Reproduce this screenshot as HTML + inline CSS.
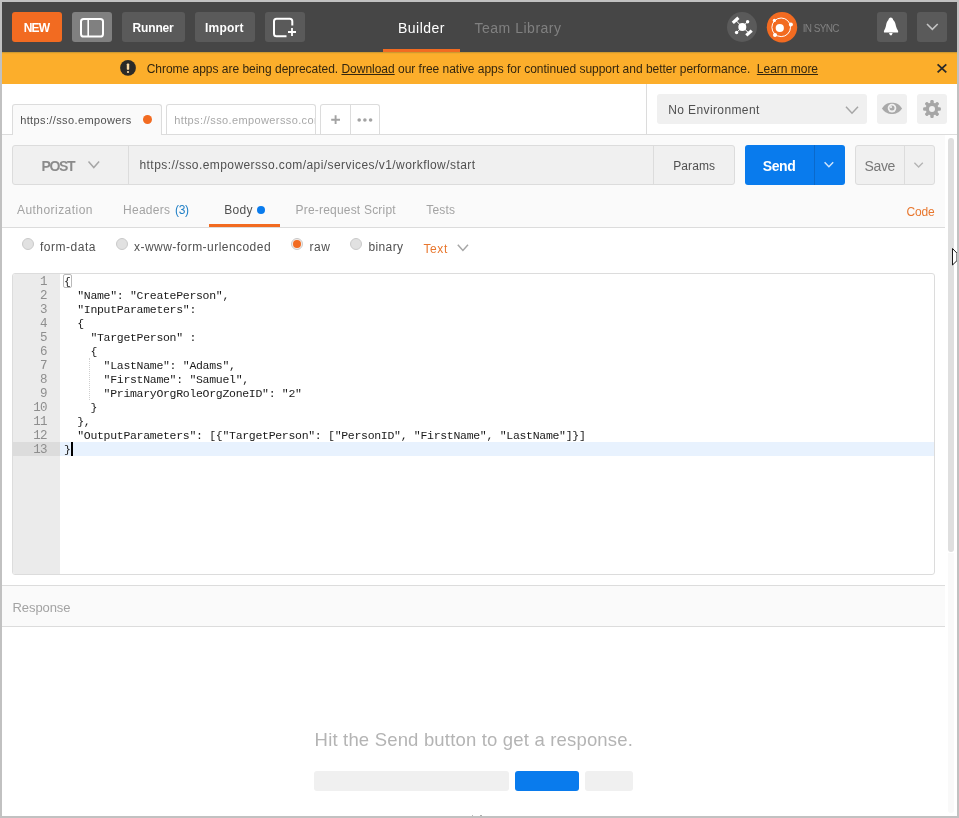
<!DOCTYPE html>
<html><head><meta charset="utf-8">
<title>Postman</title>
<style>
*{box-sizing:border-box;margin:0;padding:0}
html,body{width:959px;height:818px;overflow:hidden;background:#fff}
body{font-family:"Liberation Sans",sans-serif;position:relative;color:#505050;font-size:12px}
.abs{position:absolute}
#frame{position:absolute;left:0;top:0;width:959px;height:818px;border:2px solid #c1c1c1;pointer-events:none;z-index:50}
#hdr{left:2px;top:2px;width:955px;height:50px;background:#464646}
.hb{position:absolute;top:12px;height:30px;border-radius:3px;background:#5a5a5a}
#banner{left:2px;top:52px;width:955px;height:32px;background:#fcae2b}
.t{position:absolute;white-space:nowrap;line-height:16px;height:16px}
.w{color:#fff}
.g{color:#a3a3a3}
.o{color:#e8772e}
svg{position:absolute;overflow:visible}
.radio{position:absolute;width:12px;height:12px;border-radius:50%;background:#e1e1e1;border:1px solid #c9c9c9}
.code{position:absolute;left:64px;font-family:"Liberation Mono",monospace;font-size:11.5px;letter-spacing:-0.3px;line-height:14px;height:14px;white-space:pre;color:#1a1a1a;margin-top:.6px}
.ln{position:absolute;left:13px;width:33.5px;text-align:right;font-family:"Liberation Mono",monospace;font-size:12.5px;letter-spacing:-0.9px;line-height:14px;height:14px;color:#8e8e8e;margin-top:1.4px}
</style></head><body>
<div id="root" style="position:absolute;left:0;top:0;width:959px;height:818px;overflow:hidden;will-change:transform">

<!-- ===== header ===== -->
<div id="hdr" class="abs"></div>
<div class="hb" style="left:12px;width:50px;background:#f26b21"></div>
<div class="hb" style="left:72px;width:40px;background:#808080"></div>
<div class="hb" style="left:122px;width:63px"></div>
<div class="hb" style="left:195px;width:60px"></div>
<div class="hb" style="left:265px;width:40px"></div>
<div class="hb" style="left:877px;width:30px"></div>
<div class="hb" style="left:917px;width:30px"></div>
<div class="abs" style="left:383px;top:49px;width:77px;height:3px;background:#f26b21"></div>

<div id="t_new" class="t w" style="left:23.75px;top:20px;font-weight:bold;font-size:12px;letter-spacing:-0.88px">NEW</div>
<div id="t_runner" class="t w" style="left:132.5px;top:20px;font-weight:bold;font-size:12px;letter-spacing:-0.15px">Runner</div>
<div id="t_import" class="t w" style="left:205px;top:20px;font-weight:bold;font-size:12px;letter-spacing:0.23px">Import</div>
<div id="t_builder" class="t w" style="left:398px;top:20px;font-size:14px;letter-spacing:0.48px">Builder</div>
<div id="t_team" class="t" style="left:474.5px;top:20px;font-size:14px;color:#808080;letter-spacing:0.51px">Team Library</div>
<div id="t_sync" class="t" style="left:802.7px;top:20.5px;font-size:10px;color:#808080;letter-spacing:-0.61px">IN SYNC</div>

<!-- sidebar icon -->
<svg style="left:72px;top:12px" width="40" height="30"><rect x="9" y="7" width="22" height="17.5" rx="2.6" fill="none" stroke="#fff" stroke-width="2"/><line x1="16.2" y1="7" x2="16.2" y2="24.5" stroke="#fff" stroke-width="1.6"/></svg>
<!-- new window icon -->
<svg style="left:265px;top:12px" width="40" height="30"><path d="M21.5 24.2H11.5a2.5 2.5 0 0 1 -2.5 -2.5V9.3a2.5 2.5 0 0 1 2.5 -2.5H24.8a2.5 2.5 0 0 1 2.5 2.5V13.5" fill="none" stroke="#fff" stroke-width="2"/><path d="M23 20H31M27 16V24" stroke="#fff" stroke-width="1.8" fill="none"/></svg>
<!-- satellite -->
<svg style="left:727px;top:12px" width="30" height="30"><circle cx="15" cy="15" r="15" fill="#5a5a5a"/><g stroke="#fff" fill="#fff"><circle cx="15.3" cy="15" r="4" stroke="none"/><line x1="15.3" y1="15" x2="20.6" y2="9.7" stroke-width="1"/><line x1="15.3" y1="15" x2="9.6" y2="20.5" stroke-width="1"/><line x1="15.3" y1="15" x2="8.8" y2="8.4" stroke-width="1"/><line x1="15.3" y1="15" x2="21.8" y2="20.9" stroke-width="1"/><circle cx="20.6" cy="9.7" r="1.7" stroke="none"/><circle cx="9.6" cy="20.5" r="1.7" stroke="none"/><line x1="5.8" y1="10.9" x2="11.4" y2="5.8" stroke-width="3.2"/><line x1="19.3" y1="23.4" x2="24.7" y2="18.6" stroke-width="3.2"/></g></svg>
<!-- sync -->
<svg style="left:767px;top:12px" width="30" height="30"><circle cx="15" cy="15.3" r="15.2" fill="#f26b21"/><circle cx="14.2" cy="15.3" r="9.3" fill="none" stroke="#fff" stroke-width="1"/><circle cx="12.8" cy="16" r="4.1" fill="#fff"/><circle cx="7.4" cy="8.4" r="1.6" fill="#fff"/><circle cx="23.9" cy="12.4" r="2" fill="#fff"/><circle cx="8" cy="23.1" r="2" fill="#fff"/></svg>
<!-- bell -->
<svg style="left:877px;top:12px" width="30" height="30"><path d="M13.8 5.6C12.6 5.6 11.6 6.6 11.4 8C10.5 8.8 9.6 10.5 9.2 12.6C8.9 14.5 8.4 16.5 7.4 18C7 18.7 6.8 19.4 6.9 20A.6 .6 0 0 0 7.5 20.5H20.6A.6 .6 0 0 0 21.2 20C21.3 19.4 21 18.7 20.6 18C19.6 16.5 19 14.5 18.6 12.6C18.2 10.5 17.2 8.8 16.2 8C16 6.6 15 5.6 13.8 5.6z" fill="#fff"/><path d="M12 21H15.7L14.7 23.2H13z" fill="#fff"/></svg>
<!-- chevron -->
<svg style="left:917px;top:12px" width="30" height="30"><path d="M10 12L15.35 17.3L20.7 12" fill="none" stroke="#c4c4c4" stroke-width="1.6"/></svg>

<!-- ===== banner ===== -->
<div id="banner" class="abs"></div>
<div class="abs" style="left:2px;top:52px;width:955px;height:1px;background:#cf9a30"></div><div class="abs" style="left:2px;top:53px;width:955px;height:1px;background:#f2a92c"></div>
<svg style="left:120px;top:60px" width="16" height="16"><circle cx="8" cy="7.9" r="7.9" fill="#2b2a28"/><rect x="6.8" y="3.4" width="2.4" height="6.4" rx=".9" fill="#fbd9a3"/><circle cx="8" cy="12" r="1.1" fill="#fbd9a3"/></svg>
<div id="t_banner" class="t" style="left:146.7px;top:60.5px;font-size:12px;color:#33260f;letter-spacing:-0.02px">Chrome apps are being deprecated. <u>Download</u> our free native apps for continued support and better performance.&nbsp; <u>Learn more</u></div>
<svg style="left:937px;top:64px" width="10" height="9"><path d="M.6.4L9.3 8.3M9.3.4L.6 8.3" stroke="#2b2a28" stroke-width="1.8" fill="none"/></svg>

<!-- ===== tabs strip ===== -->
<div class="abs" style="left:2px;top:134px;width:955px;height:1px;background:#dcdcdc"></div>
<div class="abs" style="left:2px;top:135px;width:943px;height:92px;background:#fafafa"></div>
<div class="abs" style="left:646px;top:84px;width:1px;height:50px;background:#dcdcdc"></div>
<div class="abs" style="left:12px;top:104px;width:150px;height:31px;background:#fafafa;border:1px solid #dcdcdc;border-bottom:none;border-radius:3px 3px 0 0"></div>
<div class="abs" style="left:166px;top:104px;width:150px;height:30px;background:#fff;border:1px solid #dcdcdc;border-bottom:none;border-radius:3px 3px 0 0"></div>
<div class="abs" style="left:320px;top:104px;width:60px;height:30px;background:#fff;border:1px solid #dcdcdc;border-bottom:none;border-radius:3px 3px 0 0"></div>
<div class="abs" style="left:350px;top:105px;width:1px;height:29px;background:#dcdcdc"></div>
<div id="t_tab1" class="t" style="left:20.2px;top:112px;font-size:11px;color:#505050;letter-spacing:0.38px">https://sso.empowers</div>
<div class="abs" style="left:143px;top:115px;width:9px;height:9px;border-radius:50%;background:#f26b21"></div>
<div class="abs" style="left:174.25px;top:112px;width:140.25px;height:16px;overflow:hidden"><div id="t_tab2" class="t" style="left:0;top:0;font-size:11px;color:#a8a8a8;letter-spacing:0.38px">https://sso.empowersso.com/api/services</div></div>
<svg style="left:331px;top:115px" width="10" height="10"><path d="M.2 4.7H9M4.6 .3V9.1" stroke="#a3a3a3" stroke-width="1.9" fill="none"/></svg>
<svg style="left:356px;top:117px" width="18" height="6"><circle cx="3.2" cy="3" r="1.8" fill="#a3a3a3"/><circle cx="8.9" cy="3" r="1.8" fill="#a3a3a3"/><circle cx="14.6" cy="3" r="1.8" fill="#a3a3a3"/></svg>

<!-- environment -->
<div class="abs" style="left:657px;top:94px;width:210px;height:30px;background:#f0f0f0;border-radius:3px"></div>
<div id="t_env" class="t" style="left:668.3px;top:102px;font-size:12px;letter-spacing:0.38px">No Environment</div>
<svg style="left:845px;top:105.5px" width="14" height="9"><path d="M1 .7L7 7.2L13 .7" fill="none" stroke="#a6a6a6" stroke-width="1.5"/></svg>
<div class="abs" style="left:877px;top:94px;width:30px;height:30px;background:#f0f0f0;border-radius:3px"></div>
<div class="abs" style="left:917px;top:94px;width:30px;height:30px;background:#f0f0f0;border-radius:3px"></div>
<svg style="left:881px;top:102px" width="22" height="13"><path d="M.9 6.4C4 1.8 7.5 .7 11 .7S18 1.8 21.1 6.4C18 10.7 14.5 11.9 11 11.9S4 10.7 .9 6.4z" fill="#a9a9a9"/><circle cx="11" cy="6.1" r="4.3" fill="#f0f0f0"/><circle cx="11" cy="6.1" r="2.5" fill="#a9a9a9"/><circle cx="10" cy="5.1" r="1.1" fill="#f0f0f0"/></svg>
<svg id="gear" style="left:922px;top:99px" width="20" height="20" viewBox="-10 -10 20 20"><g fill="#a6a6a6"><circle r="6.4"/><g id="teeth"><rect x="-1.7" y="-8.9" width="3.4" height="17.8" rx="1.2"/><rect x="-1.7" y="-8.9" width="3.4" height="17.8" rx="1.2" transform="rotate(45)"/><rect x="-1.7" y="-8.9" width="3.4" height="17.8" rx="1.2" transform="rotate(90)"/><rect x="-1.7" y="-8.9" width="3.4" height="17.8" rx="1.2" transform="rotate(135)"/></g></g><circle r="3" fill="#f0f0f0"/></svg>

<!-- ===== URL bar ===== -->
<div class="abs" style="left:12px;top:145px;width:723px;height:40px;background:#f0f0f0;border:1px solid #dcdcdc;border-radius:3px"></div>
<div class="abs" style="left:128px;top:146px;width:1px;height:38px;background:#dcdcdc"></div>
<div class="abs" style="left:653px;top:146px;width:1px;height:38px;background:#dcdcdc"></div>
<div id="t_post" class="t" style="left:41.5px;top:157.7px;font-size:14px;font-weight:bold;color:#8b8b8b;letter-spacing:-1.38px">POST</div>
<svg style="left:88px;top:161px" width="12" height="8"><path d="M.5 .6L5.8 6.6L11.1 .6" fill="none" stroke="#a6a6a6" stroke-width="1.5"/></svg>
<div id="t_url" class="t" style="left:139.5px;top:157px;font-size:12px;letter-spacing:0.43px">https://sso.empowersso.com/api/services/v1/workflow/start</div>
<div id="t_params" class="t" style="left:673.3px;top:158px;font-size:12px;letter-spacing:0.07px">Params</div>
<div class="abs" style="left:745px;top:145px;width:100px;height:40px;background:#097bed;border-radius:3px"></div>
<div class="abs" style="left:814px;top:145px;width:1px;height:40px;background:#0a69cb"></div>
<div id="t_send" class="t w" style="left:762.8px;top:157.8px;font-size:14px;font-weight:bold;letter-spacing:-0.41px">Send</div>
<svg style="left:823px;top:161px" width="12" height="8"><path d="M1.6 1.3L5.9 5.7L10.2 1.3" fill="none" stroke="#cfe4fb" stroke-width="1.5"/></svg>
<div class="abs" style="left:855px;top:145px;width:80px;height:40px;background:#f0f0f0;border:1px solid #dcdcdc;border-radius:3px"></div>
<div class="abs" style="left:904px;top:146px;width:1px;height:38px;background:#dcdcdc"></div>
<div id="t_save" class="t" style="left:864.6px;top:157.8px;font-size:14px;color:#787878;letter-spacing:-0.41px">Save</div>
<svg style="left:913px;top:161.5px" width="11" height="7"><path d="M1.4 .8L5.6 5L9.8 .8" fill="none" stroke="#b4b4b4" stroke-width="1.4"/></svg>

<!-- ===== request tabs ===== -->
<div class="abs" style="left:2px;top:227px;width:943px;height:1px;background:#dcdcdc"></div>
<div class="abs" style="left:209px;top:224px;width:71px;height:3px;background:#f26b21"></div>
<div id="t_auth" class="t g" style="left:17px;top:202px;letter-spacing:0.45px">Authorization</div>
<div id="t_headers" class="t g" style="left:123px;top:202px;letter-spacing:0.27px">Headers</div>
<div id="t_h3" class="t" style="left:175px;top:202px;color:#1f7fc6;letter-spacing:-0.34px">(3)</div>
<div id="t_body" class="t" style="left:224.2px;top:202px;letter-spacing:0.34px">Body</div>
<div class="abs" style="left:256.7px;top:206px;width:8px;height:8px;border-radius:50%;background:#097bed"></div>
<div id="t_pre" class="t g" style="left:295.5px;top:202px;letter-spacing:0.2px">Pre-request Script</div>
<div id="t_tests" class="t g" style="left:426.3px;top:202px;letter-spacing:0.15px">Tests</div>
<div id="t_code" class="t o" style="left:906.4px;top:204px;letter-spacing:-0.1px">Code</div>

<!-- ===== body type row ===== -->
<div class="radio" style="left:21.5px;top:238px"></div>
<div id="t_fd" class="t" style="left:40px;top:239px;letter-spacing:0.52px">form-data</div>
<div class="radio" style="left:115.5px;top:238px"></div>
<div id="t_xw" class="t" style="left:134px;top:239px;letter-spacing:0.46px">x-www-form-urlencoded</div>
<div class="radio" style="left:291px;top:238px;background:#f7ece6"></div>
<div class="abs" style="left:293.1px;top:240.1px;width:7.8px;height:7.8px;border-radius:50%;background:#f26b21"></div>
<div id="t_raw" class="t" style="left:309.5px;top:239px;letter-spacing:0.58px">raw</div>
<div class="radio" style="left:349.6px;top:238px"></div>
<div id="t_bin" class="t" style="left:368.5px;top:239px;letter-spacing:0.36px">binary</div>
<div id="t_text" class="t o" style="left:423.4px;top:241px;letter-spacing:0.63px">Text</div>
<svg style="left:457px;top:244px" width="12" height="8"><path d="M.8 .8L5.9 6.4L11 .8" fill="none" stroke="#a6a6a6" stroke-width="1.5"/></svg>

<!-- ===== editor ===== -->
<div class="abs" style="left:12px;top:273px;width:923px;height:302px;border:1px solid #dcdcdc;border-radius:3px;background:#fff"></div>
<div class="abs" style="left:13px;top:274px;width:47px;height:300px;background:#ebebeb;border-radius:2px 0 0 2px"></div>
<div class="abs" style="left:13px;top:442px;width:47px;height:14px;background:#dcdcdc"></div>
<div class="abs" style="left:60px;top:442px;width:874px;height:14px;background:#e8f2fe"></div>
<div class="abs" style="left:63px;top:274px;width:9px;height:14px;border:1px solid #b9b9b9;border-radius:2px"></div>
<div class="abs" style="left:89px;top:358px;width:0;height:42px;border-left:1px dotted #cfcfcf"></div>
<div class="abs" style="left:71px;top:442px;width:2px;height:14px;background:#000"></div>
<div id="lns"></div>
<div class="ln" style="top:274px">1</div><div class="code" style="top:274px">{</div>
<div class="ln" style="top:288px">2</div><div class="code" style="top:288px">  "Name": "CreatePerson",</div>
<div class="ln" style="top:302px">3</div><div class="code" style="top:302px">  "InputParameters":</div>
<div class="ln" style="top:316px">4</div><div class="code" style="top:316px">  {</div>
<div class="ln" style="top:330px">5</div><div class="code" style="top:330px">    "TargetPerson" :</div>
<div class="ln" style="top:344px">6</div><div class="code" style="top:344px">    {</div>
<div class="ln" style="top:358px">7</div><div class="code" style="top:358px">      "LastName": "Adams",</div>
<div class="ln" style="top:372px">8</div><div class="code" style="top:372px">      "FirstName": "Samuel",</div>
<div class="ln" style="top:386px">9</div><div class="code" style="top:386px">      "PrimaryOrgRoleOrgZoneID": "2"</div>
<div class="ln" style="top:400px">10</div><div class="code" style="top:400px">    }</div>
<div class="ln" style="top:414px">11</div><div class="code" style="top:414px">  },</div>
<div class="ln" style="top:428px">12</div><div id="c12" class="code" style="top:428px">  "OutputParameters": [{"TargetPerson": ["PersonID", "FirstName", "LastName"]}]</div>
<div class="ln" style="top:442px">13</div><div class="code" style="top:442px">}</div>

<!-- ===== response ===== -->
<div class="abs" style="left:2px;top:585px;width:943px;height:42px;background:#fafafa;border-top:1px solid #dcdcdc;border-bottom:1px solid #dcdcdc"></div>
<div id="t_resp" class="t g" style="left:12.5px;top:600px;font-size:13px;letter-spacing:-0.08px">Response</div>
<div id="t_hit" class="t" style="left:314.6px;top:727.6px;font-size:18.5px;line-height:24px;height:24px;color:#b4b4b4;letter-spacing:0.18px">Hit the Send button to get a response.</div>
<div class="abs" style="left:314px;top:771px;width:195px;height:20px;background:#f0f0f0;border-radius:3px"></div>
<div class="abs" style="left:515px;top:771px;width:64px;height:20px;background:#097bed;border-radius:3px"></div>
<div class="abs" style="left:585px;top:771px;width:48px;height:20px;background:#f0f0f0;border-radius:3px"></div>

<div class="abs" style="left:472px;top:814.6px;width:1.4px;height:2px;background:#b9b9b9"></div><div class="abs" style="left:480px;top:814.6px;width:1.6px;height:2px;background:#b0b0b0"></div>
<!-- scrollbar -->
<div class="abs" style="left:947.5px;top:553px;width:6.5px;height:260px;background:#f9f9f9;border-radius:0 0 3px 3px"></div>
<div class="abs" style="left:948px;top:138px;width:6px;height:413.5px;background:#dfdfdf;border-radius:3px"></div>
<!-- mouse cursor clipped at edge -->
<svg style="left:952px;top:248px" width="5" height="18"><path d="M.5 .5V17L5 12.6V5.2z" fill="#fff" stroke="#1a1a1a" stroke-width="1"/></svg>

<div id="frame"></div>
</div>
</body></html>
